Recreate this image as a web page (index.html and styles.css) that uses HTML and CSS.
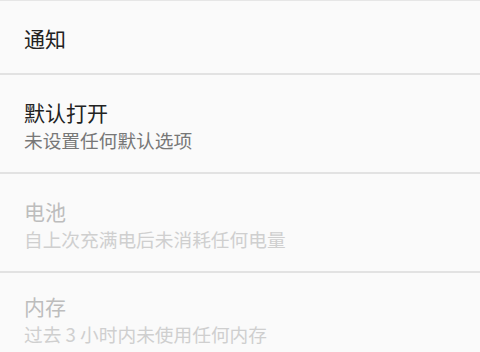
FILE: index.html
```html
<!DOCTYPE html>
<html>

<head>
    <title>应用信息</title>
    <link rel="stylesheet" href="styles.css">
</head>

<body>
    <div class="list">
        <div class="item single">
            <div class="title">通知</div>
        </div>
        <div class="item">
            <div class="title">默认打开</div>
            <div class="summary">未设置任何默认选项</div>
        </div>
        <div class="item disabled">
            <div class="title">电池</div>
            <div class="summary">自上次充满电后未消耗任何电量</div>
        </div>
        <div class="item disabled last">
            <div class="title">内存</div>
            <div class="summary">过去 3 小时内未使用任何内存</div>
        </div>
    </div>
</body>

</html>
```

FILE: styles.css
```css
html,
body {
    margin: 0;
    padding: 0;
    background: #fafafa;
}

body {
    font-family: "Noto Sans CJK SC", "Noto Sans", sans-serif;
    overflow: hidden;
}

.list {
    border-top: 1px solid #e6e6e6;
}

.item {
    height: 99px;
    padding: 3px 24px 0;
    display: flex;
    flex-direction: column;
    justify-content: center;
    border-bottom: 2px solid #e2e2e2;
    box-sizing: border-box;
}

.item.single {
    height: 74px;
    padding-top: 1px;
}

.item.last {
    height: 79px;
    padding-top: 14px;
    border-bottom: none;
}

.title {
    font-size: 21px;
    line-height: 28px;
    color: #222;
}

.summary {
    font-size: 18.7px;
    line-height: 27px;
    color: #777;
}

.disabled .title {
    color: #bdbdbd;
}

.disabled .summary {
    color: #cfcfcf;
}
```
